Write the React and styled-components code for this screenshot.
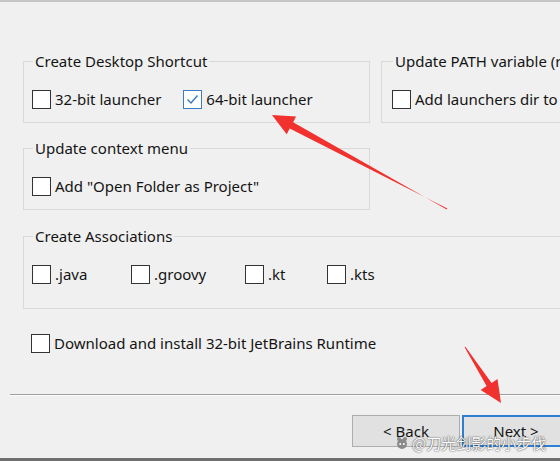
import styled, { createGlobalStyle } from "styled-components";

const Global = createGlobalStyle`
  html, body {
    margin: 0;
    padding: 0;
    background: #f0f0f0;
  }
  body {
    font-family: "Noto Sans", "Liberation Sans", sans-serif;
  }
`;

const Page = styled.div`
  position: relative;
  width: 560px;
  height: 461px;
  box-sizing: border-box;
  overflow: hidden;
  background: #f0f0f0;
  border-top: 2px solid #c6c6c6;
  border-bottom: 3px solid #6f6f6f;
  display: flex;
  flex-direction: column;
  color: #141414;
  font-size: 15px;
`;

const Body = styled.div`
  padding: 50px 0 0 23px;
  display: flex;
  flex-direction: column;
`;

const GroupRow = styled.div`
  display: flex;
  align-items: flex-start;
  gap: 11px;
  width: 800px;
`;

const Group = styled.fieldset`
  margin: ${(p) => p.$top || 0}px 0 0 0;
  padding: 20px 0 ${(p) => p.$bottom || 13}px ${(p) => p.$inset || 8}px;
  border: 1px solid #d9d9d9;
  width: ${(p) => p.$width}px;
  box-sizing: border-box;
  min-width: 0;
  flex: 0 0 auto;
`;

const Legend = styled.legend`
  margin-left: ${(p) => p.$shift || 1}px;
  padding: 0 2px;
  line-height: 18px;
  font-size: 15px;
  color: #141414;
  white-space: nowrap;
`;

const Options = styled.div`
  display: flex;
  gap: 22px;
  align-items: center;
`;

const Assoc = styled.div`
  display: grid;
  grid-template-columns: 99px 114px 82px auto;
  align-items: center;
`;

const Option = styled.label`
  display: flex;
  align-items: center;
  gap: 4px;
  line-height: 19px;
  white-space: nowrap;
`;

const Box = styled.span`
  width: 19px;
  height: 19px;
  box-sizing: border-box;
  background: #fff;
  border: 1px solid ${(p) => (p.$checked ? "#3c7cc0" : "#333")};
  display: flex;
  align-items: center;
  justify-content: center;
  flex: 0 0 auto;
`;

const Standalone = styled.div`
  margin: 25px 0 0 8px;
`;

const Divider = styled.div`
  margin: 41px 0 0 10px;
  height: 1px;
  background: #a0a0a0;
  border-bottom: 1px solid #fcfcfc;
`;

const Footer = styled.div`
  display: flex;
  gap: 2px;
  padding: 19px 0 0 352px;
`;

const Button = styled.div`
  width: 108px;
  height: 32px;
  box-sizing: border-box;
  flex: 0 0 auto;
  display: flex;
  align-items: center;
  justify-content: center;
  background: #e1e1e1;
  border: ${(p) => (p.$primary ? "2px solid #2d7fd3" : "1px solid #adadad")};
  font-size: 15px;
  color: #141414;
`;

const Watermark = styled.div`
  position: absolute;
  left: 395px;
  top: 431px;
  display: flex;
  align-items: center;
  gap: 3px;
  white-space: nowrap;
  font-family: "Noto Sans CJK SC", "Noto Sans", sans-serif;
  font-size: 15px;
  line-height: 20px;
  color: #fff;
  text-shadow: 0 0 2px rgba(0, 0, 0, 0.55), 0 0 1px rgba(0, 0, 0, 0.6);
`;

const Overlay = styled.svg`
  position: absolute;
  left: 0;
  top: 0;
  pointer-events: none;
`;

function Checkbox({ checked, label }) {
  return (
    <Option>
      <Box $checked={checked}>
        {checked && (
          <svg width="15" height="15" viewBox="0 0 15 15">
            <path d="M2.5 7.5 L6 11 L12.5 3.5" fill="none" stroke="#3a78bd" strokeWidth="1.4" />
          </svg>
        )}
      </Box>
      {label}
    </Option>
  );
}

export default function App() {
  return (
    <>
      <Global />
      <Page>
        <Body>
          <GroupRow>
            <Group $width={347}>
              <Legend>Create Desktop Shortcut</Legend>
              <Options>
                <Checkbox label="32-bit launcher" />
                <Checkbox checked label="64-bit launcher" />
              </Options>
            </Group>
            <Group $width={320} $inset={10}>
              <Legend $shift={0}>Update PATH variable (restart needed)</Legend>
              <Options>
                <Checkbox label="Add launchers dir to the PATH" />
              </Options>
            </Group>
          </GroupRow>
          <Group $width={347} $top={16}>
            <Legend>Update context menu</Legend>
            <Options>
              <Checkbox label={'Add "Open Folder as Project"'} />
            </Options>
          </Group>
          <Group $width={620} $top={17} $bottom={24}>
            <Legend>Create Associations</Legend>
            <Assoc>
              <Checkbox label=".java" />
              <Checkbox label=".groovy" />
              <Checkbox label=".kt" />
              <Checkbox label=".kts" />
            </Assoc>
          </Group>
          <Standalone>
            <Checkbox label="Download and install 32-bit JetBrains Runtime" />
          </Standalone>
        </Body>
        <Divider />
        <Footer>
          <Button>&lt; Back</Button>
          <Button $primary>Next &gt;</Button>
        </Footer>
        <Overlay width="560" height="461" viewBox="0 0 560 461">
          <polygon
            fill="#f0312d"
            points="272,113 286.7,132.2 289.7,126.5 447.3,206.6 446.7,207.4 293.1,120.3 296.1,114.6"
          />
          <polygon
            fill="#f0312d"
            points="501,401 497.5,377.1 491.6,380.9 465.4,344.7 464.6,345.3 486.6,384.1 480.7,387.9"
          />
        </Overlay>
        <Watermark>
          <svg width="14" height="14" viewBox="0 0 14 14">
            <circle cx="7" cy="8" r="5" fill="#8a8a8a" />
            <circle cx="4" cy="3" r="2" fill="#8a8a8a" />
            <circle cx="10" cy="3" r="2" fill="#8a8a8a" />
            <circle cx="5.2" cy="8" r="1" fill="#fff" />
            <circle cx="8.8" cy="8" r="1" fill="#fff" />
          </svg>
          <span>@刀光剑影的小步伐</span>
        </Watermark>
      </Page>
    </>
  );
}
